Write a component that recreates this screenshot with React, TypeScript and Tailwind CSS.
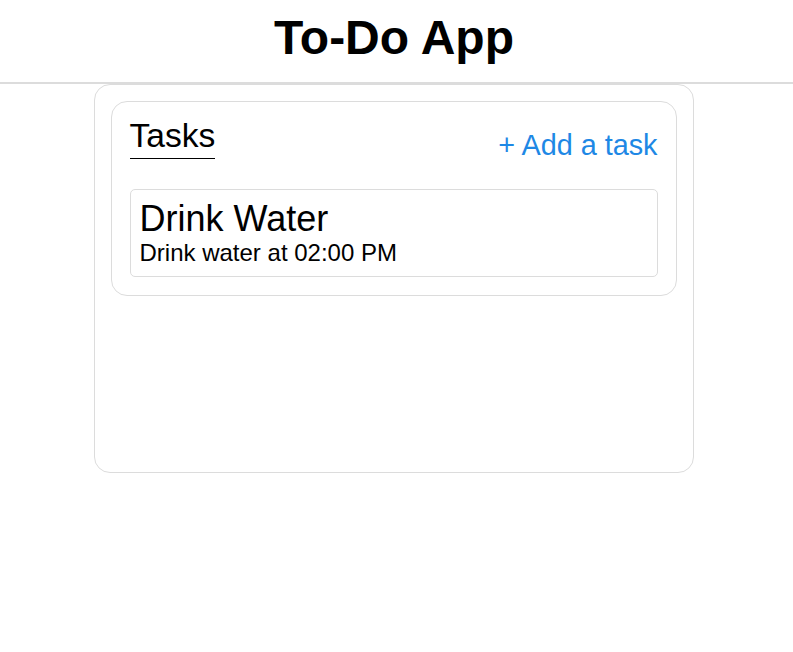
import React from 'react';

const tasks = [{ id: 1, title: 'Drink Water', description: 'Drink water at 02:00 PM' }];

export default function App() {
  return (
    <div className="min-h-screen bg-white font-['Liberation_Sans',Arial,sans-serif] text-black">
      <header className="border-b-2 border-[#dcdcdc] pt-[10px] pb-[17px] pr-[5px] text-center">
        <h1 className="text-[48px] font-bold leading-[55px]">To-Do App</h1>
      </header>

      <div className="pr-[6px]">
        <main className="mx-auto h-[389px] w-[600px] rounded-2xl border border-[#dcdcdc] p-4">
          <section className="rounded-2xl border border-[#dcdcdc] px-[18px] pt-[14px] pb-[18px]">
            <div className="flex items-end justify-between">
              <h2 className="border-b border-black pb-[3px] text-[33.6px] leading-[39px]">Tasks</h2>
              <button className="mb-[-3px] cursor-pointer text-[28.8px] leading-[33px] text-[#1e88e5]">
                + Add a task
              </button>
            </div>

            <ul className="mt-[30px] flex flex-col gap-3">
              {tasks.map((task) => (
                <li key={task.id} className="rounded-[5px] border border-[#dcdcdc] px-[9px] pt-[8px] pb-[9px]">
                  <h3 className="text-[36px] leading-[41px]">{task.title}</h3>
                  <p className="text-[24px] leading-[28px]">{task.description}</p>
                </li>
              ))}
            </ul>
          </section>
        </main>
      </div>
    </div>
  );
}
